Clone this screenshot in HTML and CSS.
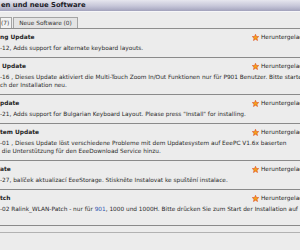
FILE: index.html
```html
<!DOCTYPE html>
<html lang="de">
<head>
  <meta charset="UTF-8" />
  <title>Aktualisierungen und neue Software</title>
  <link rel="stylesheet" href="styles.css">
</head>
<body>
  <div class="window">
    <div class="titlebar">en und neue Software</div>
    <div class="tabs">
      <span class="tab active">(7)</span>
      <span class="tab">Neue Software (0)</span>
    </div>

    <ul class="updates">
      <li class="update">
        <div class="update-head">
          <span class="name">ng Update</span>
          <span class="status"><svg class="star" viewBox="0 0 10 10"><polygon points="5,0.4 6.3,3.5 9.6,3.7 7.1,5.9 7.9,9.3 5,7.5 2.1,9.3 2.9,5.9 0.4,3.7 3.7,3.5"/></svg>Heruntergeladen</span>
        </div>
        <p class="desc">-12, Adds support for alternate keyboard layouts.</p>
      </li>
      <li class="update">
        <div class="update-head">
          <span class="name">&nbsp;Update</span>
          <span class="status"><svg class="star" viewBox="0 0 10 10"><polygon points="5,0.4 6.3,3.5 9.6,3.7 7.1,5.9 7.9,9.3 5,7.5 2.1,9.3 2.9,5.9 0.4,3.7 3.7,3.5"/></svg>Heruntergeladen</span>
        </div>
        <p class="desc">-16 , Dieses Update aktiviert die Multi-Touch Zoom In/Out Funktionen nur für P901 Benutzer. Bitte starten<br>ch der Installation neu.</p>
      </li>
      <li class="update">
        <div class="update-head">
          <span class="name">pdate</span>
          <span class="status"><svg class="star" viewBox="0 0 10 10"><polygon points="5,0.4 6.3,3.5 9.6,3.7 7.1,5.9 7.9,9.3 5,7.5 2.1,9.3 2.9,5.9 0.4,3.7 3.7,3.5"/></svg>Heruntergeladen</span>
        </div>
        <p class="desc">-21, Adds support for Bulgarian Keyboard Layout. Please press "Install" for installing.</p>
      </li>
      <li class="update">
        <div class="update-head">
          <span class="name">tem Update</span>
          <span class="status"><svg class="star" viewBox="0 0 10 10"><polygon points="5,0.4 6.3,3.5 9.6,3.7 7.1,5.9 7.9,9.3 5,7.5 2.1,9.3 2.9,5.9 0.4,3.7 3.7,3.5"/></svg>Heruntergeladen</span>
        </div>
        <p class="desc">-01 , Dieses Update löst verschiedene Probleme mit dem Updatesystem auf EeePC V1.6x baserten<br>&nbsp;die Unterstützung für den EeeDownload Service hinzu.</p>
      </li>
      <li class="update">
        <div class="update-head">
          <span class="name">ate</span>
          <span class="status"><svg class="star" viewBox="0 0 10 10"><polygon points="5,0.4 6.3,3.5 9.6,3.7 7.1,5.9 7.9,9.3 5,7.5 2.1,9.3 2.9,5.9 0.4,3.7 3.7,3.5"/></svg>Heruntergeladen</span>
        </div>
        <p class="desc">-27, balíček aktualizací EeeStorage. Stiskněte Instalovat ke spuštění instalace.</p>
      </li>
      <li class="update last">
        <div class="update-head">
          <span class="name">tch</span>
          <span class="status"><svg class="star" viewBox="0 0 10 10"><polygon points="5,0.4 6.3,3.5 9.6,3.7 7.1,5.9 7.9,9.3 5,7.5 2.1,9.3 2.9,5.9 0.4,3.7 3.7,3.5"/></svg>Heruntergeladen</span>
        </div>
        <p class="desc">-02 Ralink_WLAN-Patch - nur für <span class="model">901</span>, 1000 und 1000H. Bitte drücken Sie zum Start der Installation auf</p>
      </li>
    </ul>
  </div>
</body>
</html>
```

FILE: styles.css
```css
html, body {
  margin: 0;
  overflow: hidden;
}
body {
  width: 300px;
  height: 250px;
  background: #ececec;
  font-family: "DejaVu Sans", Verdana, sans-serif;
  color: #2a2a2a;
}
.window {
  width: 340px;
}
.titlebar {
  height: 11px;
  line-height: 11px;
  padding-left: 1px;
  font-size: 6.8px;
  font-weight: bold;
  color: #1c1c28;
  background: linear-gradient(#e6e6ee, #c6c6d8 55%, #a2a2bc);
  border-bottom: 1px solid #f6f6f8;
}
.tabs {
  display: flex;
  align-items: flex-end;
  gap: 1px;
  height: 16px;
  border-bottom: 1px solid #8e8e8e;
}
.tab {
  height: 10px;
  line-height: 10px;
  padding: 0 5px;
  font-size: 5.8px;
  color: #333;
  background: #e4e4e4;
  border: 1px solid #a4a4a4;
  border-bottom: none;
}
.tab.active {
  padding: 0 2px 0 0;
  background: #f2f2f2;
}
.updates {
  list-style: none;
  margin: 0;
  padding: 0 0 6px;
  border-bottom: 1px solid #b2b2b2;
}
.update {
  padding: 3px 0 5px;
  border-bottom: 1px solid #8a8a8a;
}
.update.last {
  padding-bottom: 12px;
}
.update-head {
  display: grid;
  grid-template-columns: 252px auto;
  align-items: center;
  height: 10px;
  line-height: 10px;
}
.name {
  font-size: 5.9px;
  font-weight: bold;
  color: #1e1e1e;
  white-space: nowrap;
}
.status {
  display: flex;
  align-items: center;
  gap: 2px;
  font-size: 5.8px;
  color: #222;
  white-space: nowrap;
}
.star {
  width: 7px;
  height: 7px;
  fill: #f3a21a;
  stroke: #e0461a;
  stroke-width: 0.8;
}
.desc {
  margin: 2px 0 0;
  font-size: 5.8px;
  line-height: 8px;
  white-space: nowrap;
}
.model {
  color: #2f55b0;
}
```
